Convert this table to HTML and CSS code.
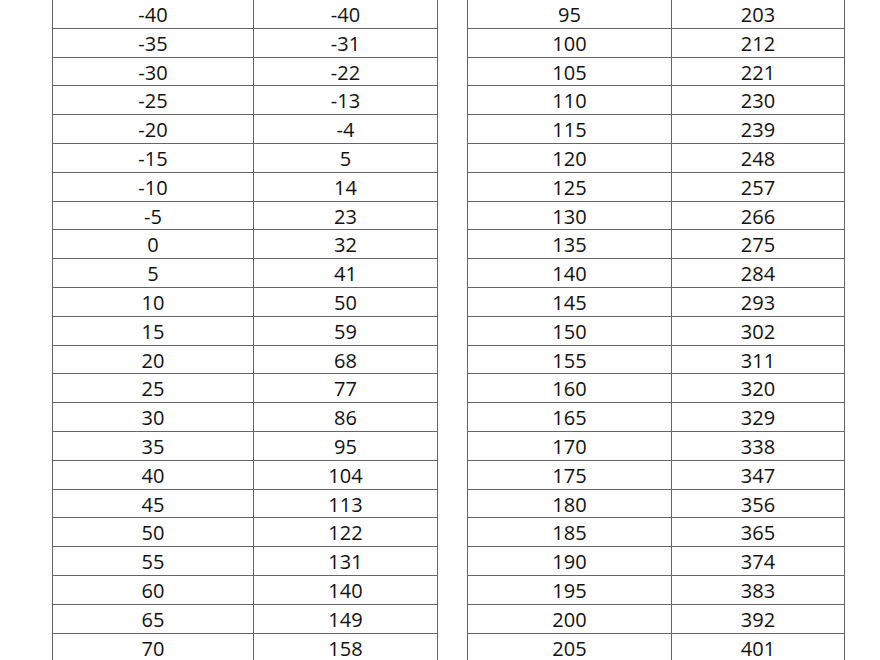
FILE: index.html
```html
<!DOCTYPE html>
<html>
<head>
<meta charset="utf-8">
<link rel="stylesheet" href="styles.css">
</head>
<body>
<div class="page">
  <div class="grid grid-left">
    <div class="c">-40</div><div class="c">-40</div>
    <div class="c">-35</div><div class="c">-31</div>
    <div class="c">-30</div><div class="c">-22</div>
    <div class="c">-25</div><div class="c">-13</div>
    <div class="c">-20</div><div class="c">-4</div>
    <div class="c">-15</div><div class="c">5</div>
    <div class="c">-10</div><div class="c">14</div>
    <div class="c">-5</div><div class="c">23</div>
    <div class="c">0</div><div class="c">32</div>
    <div class="c">5</div><div class="c">41</div>
    <div class="c">10</div><div class="c">50</div>
    <div class="c">15</div><div class="c">59</div>
    <div class="c">20</div><div class="c">68</div>
    <div class="c">25</div><div class="c">77</div>
    <div class="c">30</div><div class="c">86</div>
    <div class="c">35</div><div class="c">95</div>
    <div class="c">40</div><div class="c">104</div>
    <div class="c">45</div><div class="c">113</div>
    <div class="c">50</div><div class="c">122</div>
    <div class="c">55</div><div class="c">131</div>
    <div class="c">60</div><div class="c">140</div>
    <div class="c">65</div><div class="c">149</div>
    <div class="c">70</div><div class="c">158</div>
  </div>
  <div class="grid grid-right">
    <div class="c">95</div><div class="c">203</div>
    <div class="c">100</div><div class="c">212</div>
    <div class="c">105</div><div class="c">221</div>
    <div class="c">110</div><div class="c">230</div>
    <div class="c">115</div><div class="c">239</div>
    <div class="c">120</div><div class="c">248</div>
    <div class="c">125</div><div class="c">257</div>
    <div class="c">130</div><div class="c">266</div>
    <div class="c">135</div><div class="c">275</div>
    <div class="c">140</div><div class="c">284</div>
    <div class="c">145</div><div class="c">293</div>
    <div class="c">150</div><div class="c">302</div>
    <div class="c">155</div><div class="c">311</div>
    <div class="c">160</div><div class="c">320</div>
    <div class="c">165</div><div class="c">329</div>
    <div class="c">170</div><div class="c">338</div>
    <div class="c">175</div><div class="c">347</div>
    <div class="c">180</div><div class="c">356</div>
    <div class="c">185</div><div class="c">365</div>
    <div class="c">190</div><div class="c">374</div>
    <div class="c">195</div><div class="c">383</div>
    <div class="c">200</div><div class="c">392</div>
    <div class="c">205</div><div class="c">401</div>
  </div>
</div>
</body>
</html>
```

FILE: styles.css
```css
html, body {
  margin: 0;
  padding: 0;
  background: #ffffff;
  overflow: hidden;
}
.page {
  display: flex;
  align-items: flex-start;
  gap: 29px;
  padding-left: 52px;
  width: 880px;
  height: 660px;
  box-sizing: border-box;
  overflow: hidden;
  font-family: "Open Sans", "Liberation Sans", sans-serif;
  font-size: 20px;
  color: #111111;
}
.grid {
  display: grid;
  grid-auto-rows: 28.8px;
  border-top: 1px solid #666666;
  border-left: 1px solid #666666;
  margin-top: -1px;
}
.grid-left {
  grid-template-columns: 201px 184px;
}
.grid-right {
  grid-template-columns: 204px 173px;
}
.c {
  box-sizing: border-box;
  border-right: 1px solid #666666;
  border-bottom: 1px solid #666666;
  text-align: center;
  line-height: 28.8px;
  padding-top: 1px;
}
```
